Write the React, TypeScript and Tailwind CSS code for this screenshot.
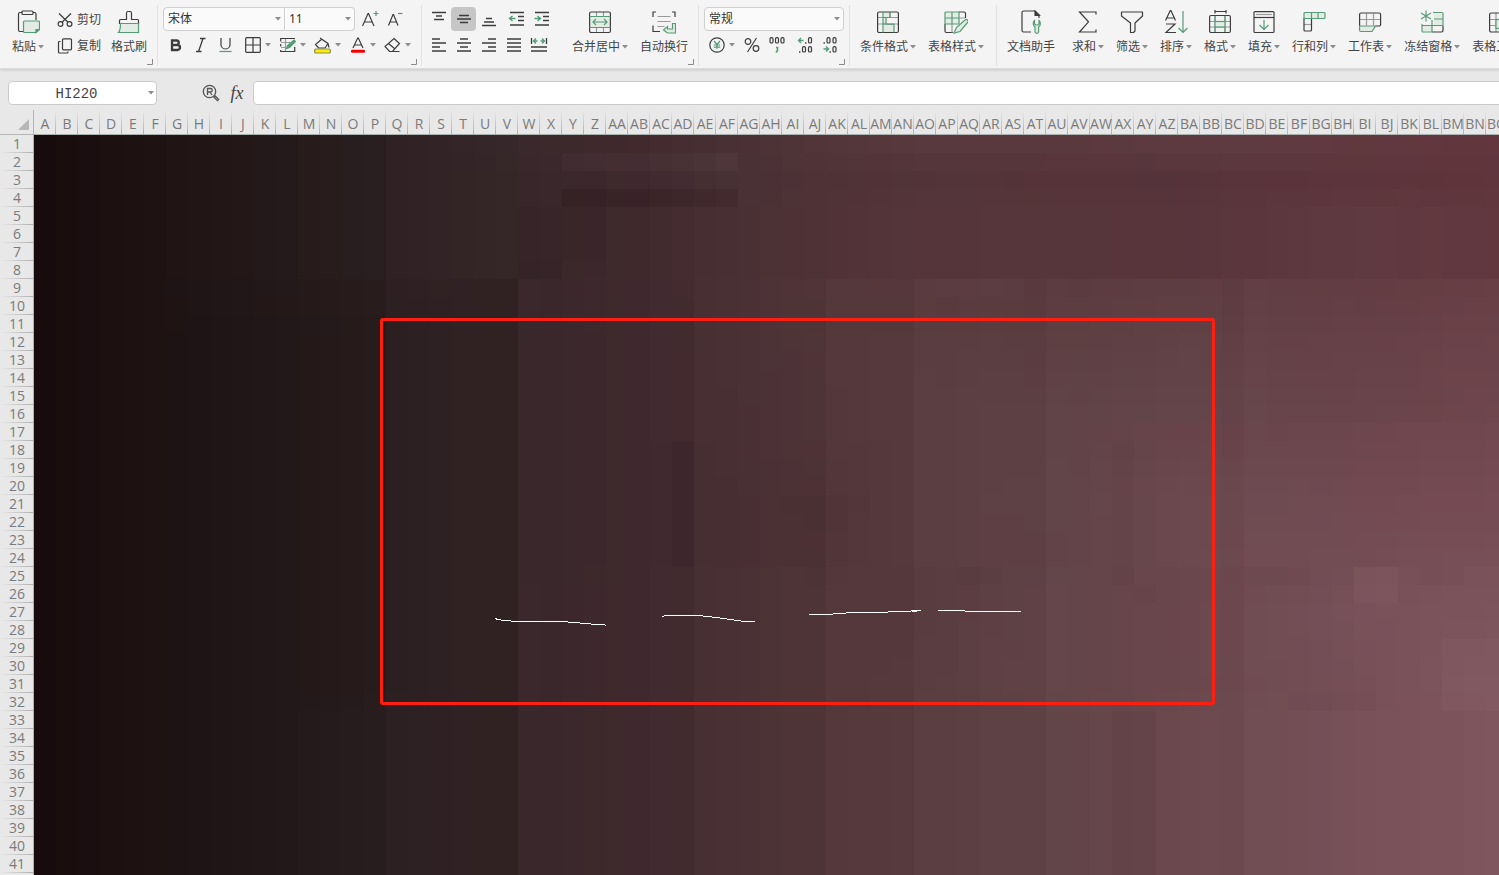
import React from "react";

type Kids = { children?: React.ReactNode };
type RGB = [number, number, number];

const INK = "#3c3c3c";
const GREEN = "#559c76";
const PALE = "#e3ebe5";
const GREY = "#9a9a9a";

/* ---------- sheet colours ---------- */

const hex = (s: string): RGB => [
  parseInt(s.slice(0, 2), 16),
  parseInt(s.slice(2, 4), 16),
  parseInt(s.slice(4, 6), 16),
];

const palette = (s: string) => s.split(" ");
const UPPER = palette("180b0d 1c1011 221617 2a1f20 302224 352628 38272a 3f292d 482f33 513337 553539 57363b 57353b 5c373e 5f3a40 61383f 62373e");
const BLOCK2 = palette("180b0d 1c1011 201516 271b1c 2c1f21 322325 38272a 3f292e 483034 53373b 583c3f 5d3f42 604246 644147 674148 6a4249 6b4349");
const BOTTOM = palette("180b0d 1c1011 201516 281d1e 2d2022 322325 38272a 40292e 483034 53373a 593d40 614448 6a484d 714d54 795159 7d535b 81585f");

const COL_STOPS = [0, 3, 8, 15, 16, 21, 22, 27, 31, 36, 40, 46, 51, 56, 60, 64, 67];
const ROW_STOPS: { row: number; colors: string[] }[] = [
  { row: 1, colors: palette("180b0d 1c1011 221617 2a1f20 302224 36282a 39292c 41292d 493035 533639 58393d 5a393e 5c3a40 5f3a41 60393f 62363d 63363e") },
  { row: 3, colors: palette("180b0d 1c1011 221617 2a1f20 302224 352628 38272a 3f292e 483135 4f3236 523438 553338 55333a 5b343b 5c343b 5f343b 60353c") },
  { row: 5, colors: UPPER },
  { row: 8, colors: UPPER },
  { row: 9, colors: palette("180b0d 1c1011 211617 281c1d 2e2022 322325 39272b 40292e 493035 54373a 593a3e 5b3b3f 5e3d42 603e43 633d43 663e44 673f45") },
  { row: 12, colors: BLOCK2 },
  { row: 16, colors: palette("180b0d 1c1011 201516 271b1c 2c1f21 322325 38272a 3f292e 482f34 52363a 593d40 604347 63454a 67454b 69454b 6d454b 6e464d") },
  { row: 17, colors: palette("180b0d 1c1011 201516 271b1c 2c1f21 322325 38272a 3f292e 482f34 52363a 593d40 604347 67444a 6a464c 6e464d 71474f 724850") },
  { row: 21, colors: palette("180b0d 1c1011 201516 271b1c 2c1f21 322325 38272a 3f292e 472e33 503437 5a3d40 614448 6a484d 6e4b52 734a52 754a53 764b54") },
  { row: 24, colors: palette("180b0d 1c1011 201516 271b1c 2c1f21 322325 38272a 3f292e 472e33 513538 5a3d40 614347 6a484d 714c53 744d54 774f56 784f56") },
  { row: 25, colors: palette("180b0d 1c1011 201516 271b1c 2c1f21 322325 38272a 40292e 483034 53373a 583b3e 62454a 69464b 6f4b52 764f57 7a5259 7b525a") },
  { row: 27, colors: palette("180b0d 1c1011 201516 271b1c 2c1f21 322325 39272b 40292e 483034 53373a 583b3e 63454a 69464b 714d54 79515a 7b535b 7c545c") },
  { row: 31, colors: palette("180b0d 1c1011 201516 271b1c 2c1f21 322325 39272b 40292e 483034 53373a 593c40 63454a 69464b 704c53 764f57 7e565d 80585f") },
  { row: 33, colors: BOTTOM },
  { row: 42, colors: BOTTOM },
];

/* Per-column tone steps where neighbouring bands meet. */
const COL_SHIFT: Record<number, number> = {
  20: -1, 21: -2, 22: 1, 29: -2, 30: 1, 34: -1, 35: -2, 36: 1, 38: -1, 39: -2, 40: 1, 44: -1, 45: -2, 46: 1, 54: -2, 55: 1,
};

/* Local tone shifts: first row, last row, first column, last column, shift. */
const PATCHES: number[][] = [
  [2, 2, 24, 31, 5],
  [4, 4, 24, 31, -6],
  [5, 7, 22, 25, -2],
  [8, 8, 22, 23, -3],
  [9, 9, 41, 44, 2],
  [18, 24, 29, 29, -3],
  [18, 24, 49, 49, -2],
  [21, 24, 34, 36, -1],
  [25, 25, 35, 36, -1],
  [25, 25, 42, 43, -2],
  [25, 25, 49, 49, -3],
  [25, 25, 55, 57, -2],
  [25, 26, 60, 61, 4],
  [25, 25, 63, 64, -3],
  [26, 26, 50, 50, -2],
  [32, 32, 57, 60, -2],
  [29, 32, 64, 66, 2],
  [33, 42, 49, 50, -3],
];

const lerp = (a: number, b: number, t: number) => a + (b - a) * t;

function alongRow(colors: string[], col: number): RGB {
  let i = 0;
  while (i < COL_STOPS.length - 2 && COL_STOPS[i + 1] <= col) i++;
  const t = (col - COL_STOPS[i]) / (COL_STOPS[i + 1] - COL_STOPS[i]);
  const a = hex(colors[i]);
  const b = hex(colors[i + 1]);
  return [lerp(a[0], b[0], t), lerp(a[1], b[1], t), lerp(a[2], b[2], t)];
}

function cellColor(row: number, col: number): string {
  let i = 0;
  while (i < ROW_STOPS.length - 2 && ROW_STOPS[i + 1].row <= row) i++;
  const lo = ROW_STOPS[i];
  const hi = ROW_STOPS[i + 1];
  const t = Math.min(1, (row - lo.row) / (hi.row - lo.row));
  const a = alongRow(lo.colors, col);
  const b = alongRow(hi.colors, col);
  let shift = row > 8 ? COL_SHIFT[col] ?? 0 : 0;
  for (const [r1, r2, c1, c2, d] of PATCHES) {
    if (row >= r1 && row <= r2 && col >= c1 && col <= c2) shift += d;
  }
  const [r, g, bl] = a.map((v, k) => Math.round(lerp(v, b[k], t) + shift));
  return `rgb(${r}, ${g}, ${bl})`;
}

const letter = (i: number) => String.fromCharCode(65 + i);
const colName = (i: number) => (i < 26 ? letter(i) : letter(Math.floor(i / 26) - 1) + letter(i % 26));
const COLUMNS = Array.from({ length: 67 }, (_, i) => colName(i));
const ROWS = Array.from({ length: 42 }, (_, i) => i + 1);

/* ---------- icons ---------- */

function Svg({ w, h, children }: Kids & { w: number; h: number }) {
  return (
    <svg width={w} height={h} viewBox={`0 0 ${w} ${h}`} fill="none" stroke={INK} strokeWidth="1.2" className="flex-none" aria-hidden="true">
      {children}
    </svg>
  );
}

const Arrow = () => (
  <svg width="6" height="4" viewBox="0 0 6 4" className="flex-none" aria-hidden="true">
    <path d="M0 0h6L3 3.500z" fill="#8c8c8c" />
  </svg>
);

const PasteIcon = () => (
  <Svg w={24} h={24}>
    <path d="M6 2.500H4A1.500 1.500 0 0 0 2.500 4v16A1.500 1.500 0 0 0 4 21.500h3M17 2.500h1.500A1.500 1.500 0 0 1 20 4v6" />
    <rect x="6" y="1" width="11" height="3.500" rx="1" />
    <path d="M8.500 11h14a1 1 0 0 1 1 1v7.500L20 22.500H8.500a1 1 0 0 1-1-1V12a1 1 0 0 1 1-1z" fill={PALE} stroke={GREEN} />
    <path d="M23.500 19.500H20v3z" fill={GREEN} stroke={GREEN} />
  </Svg>
);
const CutIcon = () => (
  <Svg w={16} h={16}>
    <circle cx="3.500" cy="12" r="2.400" />
    <circle cx="12.500" cy="12" r="2.400" />
    <path d="M2 1.500l9 8.800M14 1.500L5 10.300" />
  </Svg>
);
const CopyIcon = () => (
  <Svg w={16} h={16}>
    <rect x="5.500" y="0.800" width="9" height="11" rx="1" />
    <path d="M3.500 3.500h-1a1 1 0 0 0-1 1v9.500a1 1 0 0 0 1 1h7.500a1 1 0 0 0 1-1v-.5" />
  </Svg>
);
const BrushIcon = () => (
  <Svg w={24} h={24}>
    <path d="M9.500 9.500V3a1.500 1.500 0 0 1 1.500-1.500h2a1.500 1.500 0 0 1 1.500 1.500v6.500h6a1 1 0 0 1 1 1v3h-19v-3a1 1 0 0 1 1-1z" />
    <path d="M3.500 13.500h18v9H1.500c2-2 2-5 2-9z" fill={PALE} stroke={GREEN} />
  </Svg>
);
const GrowIcon = () => (
  <Svg w={18} h={18}>
    <path d="M0.500 16L6 3.500h.5L12 16M2.500 12h7.500" />
    <path d="M11.500 3.500h5M14 1v5" stroke={GREEN} />
  </Svg>
);
const ShrinkIcon = () => (
  <Svg w={18} h={18}>
    <path d="M1.500 15.500L6 4.500h.5L11 15.500M3 12h6.500" />
    <path d="M11 3.500h4.500" stroke={GREEN} />
  </Svg>
);
const BoldIcon = () => (
  <Svg w={16} h={16}>
    <path d="M4 3.500h4.500a2.200 2.200 0 0 1 0 4.500H4zM4 8h5.500a2.300 2.300 0 0 1 0 5H4z" strokeWidth="2.300" />
  </Svg>
);
const ItalicIcon = () => (
  <Svg w={16} h={16}>
    <path d="M7 1.500h5.500M3 14.500h5.500M10 1.500L5.500 14.500" strokeWidth="1.300" />
  </Svg>
);
const UnderlineIcon = () => (
  <Svg w={16} h={16}>
    <path d="M3 1v6.500a4.500 4.500 0 0 0 9 0V1" />
    <path d="M1.500 14.500h12" stroke={GREEN} />
  </Svg>
);
const BordersIcon = () => (
  <Svg w={16} h={16}>
    <rect x="0.700" y="0.700" width="14.600" height="14.600" rx="1" />
    <path d="M8 1v14M1 8h14" />
  </Svg>
);
const TablePenIcon = () => (
  <Svg w={16} h={16}>
    <path d="M15 1.500H0.700v3M0.700 13v1.500h14V10M0.700 7v2.500" />
    <path d="M1 5.500h9M5.500 2v12M1 10.500h5" stroke={GREY} />
    <path d="M6.500 11.500l1-3L14 3l1.500 1.500-6 6z" fill={GREEN} stroke={GREEN} />
  </Svg>
);
const FillIcon = () => (
  <Svg w={17} h={17}>
    <path d="M6 1l8 5.500-3 4.500H4.500L1.500 7.500 8 2M14 6.500l1 4" />
    <rect x="0.700" y="12" width="15.600" height="4" rx="1" fill="#ffee00" stroke="#8b8b5a" />
  </Svg>
);
const FontColorIcon = () => (
  <Svg w={16} h={16}>
    <path d="M3 11L7.700 1h.6L13 11M4.500 8h7" />
    <rect x="1" y="12.800" width="14" height="3" rx="1.200" fill="#f50000" stroke="none" />
  </Svg>
);
const EraserIcon = () => (
  <Svg w={17} h={16}>
    <path d="M10 1.500l5.500 5-7 8H5.500L1 9.500zM4.500 6.500l6.500 5.500M7.500 14.500h8" />
  </Svg>
);

const Lines = ({ d, green }: { d: string; green?: string }) => (
  <Svg w={18} h={16}>
    <path d={d} strokeWidth="1.300" />
    {green && <path d={green} stroke={GREEN} strokeWidth="1.400" />}
  </Svg>
);

const MergeIcon = () => (
  <Svg w={24} h={24}>
    <path d="M1.500 6.500h21v11h-21z" fill={PALE} stroke="none" />
    <path d="M8.500 2v4.500M15.500 2v4.500M8.500 17.500v5M15.500 17.500v5" stroke={GREY} />
    <rect x="1.600" y="2" width="20.800" height="20.500" rx="1.500" />
    <path d="M1.500 6.500h21M1.500 17.500h21M5 12h14M8 9l-3 3 3 3M16 9l3 3-3 3" stroke={GREEN} />
  </Svg>
);
const WrapIcon = () => (
  <Svg w={24} h={24}>
    <path d="M4 2H1v5M20 2h3v5M1 15.500V21.500h7" />
    <path d="M5.500 6.500h13M5.500 11.500h13M5.500 16.500h7" stroke={GREY} />
    <path d="M20.500 13.500V19h-5v-2.500L11.500 20l4 3H23.500V13.500z" fill={PALE} stroke={GREEN} />
  </Svg>
);
const YenIcon = () => (
  <Svg w={16} h={16}>
    <circle cx="8" cy="8" r="7.200" />
    <path d="M5 4l3 3.500L11 4M8 7.500V12M4.800 8h6.400M4.800 10.200h6.400" stroke={GREEN} />
  </Svg>
);
const PercentIcon = () => (
  <Svg w={16} h={16}>
    <circle cx="4" cy="4.500" r="2.800" />
    <circle cx="12" cy="11.500" r="2.800" />
    <path d="M12.500 1l-9 14" />
  </Svg>
);
const zero = (x: number, y: number) => <rect x={x} y={y} width="3" height="5.400" rx="1.300" strokeWidth="1.200" />;
const ThousandsIcon = () => (
  <Svg w={16} h={18}>
    {zero(1, 1.600)}
    {zero(6.500, 1.600)}
    {zero(12, 1.600)}
    <path d="M7 11.500h1.500v3L7 16.500" stroke={GREEN} strokeWidth="1.600" />
  </Svg>
);
const MoreDecimalsIcon = () => (
  <Svg w={16} h={18}>
    {zero(11.500, 1.600)}
    {zero(5.500, 10.600)}
    {zero(11.500, 10.600)}
    <path d="M8 7h1.400M2 16h1.400" strokeWidth="1.400" />
    <path d="M1.500 4.500h5M4 2L1.500 4.500 4 7" stroke={GREEN} strokeWidth="1.400" />
  </Svg>
);
const FewerDecimalsIcon = () => (
  <Svg w={16} h={18}>
    {zero(5, 1.600)}
    {zero(11, 1.600)}
    {zero(11, 10.600)}
    <path d="M1.500 7h1.400M7.500 16h1.400" strokeWidth="1.400" />
    <path d="M1.500 13h5M4 10.500L6.500 13 4 15.500" stroke={GREEN} strokeWidth="1.400" />
  </Svg>
);
const CondIcon = () => (
  <Svg w={24} h={24}>
    <path d="M7.500 2h6v5.500h-6zM7.500 14h10.500v8.500H7.500zM6.500 7.500h4V14h-4z" fill={PALE} stroke="none" />
    <path d="M2 7.500h20M2 14h20M14 2v6M10.500 14.500h7.500" stroke={GREY} />
    <rect x="1.600" y="2" width="20.800" height="20.500" rx="1.500" />
    <path d="M7 2v20.500M7 7.500h7V2M10 7.500V14M7 14h11v8.500" stroke={GREEN} />
  </Svg>
);
const TableStyleIcon = () => (
  <Svg w={24} h={24}>
    <path d="M1 14v7a1.500 1.500 0 0 0 1.500 1.500H9M15 2h5A1.500 1.500 0 0 1 21.500 3.500V8" />
    <path d="M15 8h6M8 14v8.500" stroke={GREY} />
    <path d="M1 3a1 1 0 0 1 1-1h13v12H1zM1 8h14M8 2v12" fill={PALE} stroke={GREEN} />
    <path d="M10 23l2.500-5.500 8.500-7.500a1.700 1.700 0 0 1 2.500 2.500l-7.500 9z" fill={PALE} stroke={GREEN} />
  </Svg>
);
const DocIcon = () => (
  <Svg w={24} h={24}>
    <path d="M12 22H4.500A1.500 1.500 0 0 1 3 20.500v-18A1.500 1.500 0 0 1 4.500 1H16l4 4v3" />
    <path d="M16 1v4.500h4.500z" fill={INK} />
    <path d="M15.500 10.500c-2 2-1.500 5 .5 6.500v4.500a1.800 1.800 0 0 0 3.600 0V17c2-1.500 2.500-4.500.4-6.500v3.500l-1.200 1h-2l-1.300-1z" fill={PALE} stroke={GREEN} />
  </Svg>
);
const SumIcon = () => (
  <Svg w={24} h={24}>
    <path d="M20 4.500V2H3.500l9 9.800L3.500 22H20v-2.500" />
  </Svg>
);
const FilterIcon = () => (
  <Svg w={24} h={24}>
    <path d="M1.500 2h21v4L15 13v8l-1.500 1.500h-3V13L1.500 6z" strokeLinejoin="round" />
  </Svg>
);
const SortIcon = () => (
  <Svg w={24} h={24}>
    <path d="M1.500 10.500L6.300 0.500h.6l4.600 10M3 8h7M2 14h9L2 22.500h10" />
    <path d="M19 1v21.500M14.500 18l4.500 4.500 4.500-4.500" stroke={GREEN} />
  </Svg>
);
const FormatIcon = () => (
  <Svg w={24} h={24}>
    <path d="M7 1.500h11M7 0v3.500M18 0v3.500" />
    <path d="M7 6v16.500M17 6v16.500M2 11.500h20M2 17h20" stroke={GREY} />
    <rect x="7" y="11.500" width="10" height="5.500" fill={PALE} stroke={GREEN} />
    <path d="M7 6v5M17 6v5M7 17v5M17 17v5" stroke={GREEN} />
    <rect x="1.600" y="5.500" width="20.800" height="17" rx="1.500" />
  </Svg>
);
const FillDownIcon = () => (
  <Svg w={24} h={24}>
    <rect x="2" y="1.600" width="20" height="20.900" rx="1" />
    <path d="M4 4.500h16" stroke={GREY} />
    <path d="M2 7.500h20" />
    <path d="M12 10v9.500M7.500 15l4.500 4.500 4.500-4.500" stroke={GREEN} />
  </Svg>
);
const RowColIcon = () => (
  <Svg w={24} h={24}>
    <path d="M2 14.500h7" stroke={GREY} />
    <path d="M2 8v12a1 1 0 0 0 1 1h5.500a1 1 0 0 0 1-1V8" />
    <rect x="2" y="2.500" width="21" height="6" rx="1" fill={PALE} stroke={GREEN} />
    <path d="M9.500 2.500v6M16 2.500v6" stroke={GREEN} />
  </Svg>
);
const WorksheetIcon = () => (
  <Svg w={24} h={24}>
    <path d="M8.500 3.500v12M15.500 3.500v12M2 9.500h20" stroke={GREY} />
    <path d="M1.600 16V4.500a1.500 1.500 0 0 1 1.500-1.500h18a1.500 1.500 0 0 1 1.500 1.500v10A1.500 1.500 0 0 1 21 16h-3.500" />
    <path d="M1.600 16h16L14 21.500H3a1.500 1.500 0 0 1-1.500-1.500z" fill={PALE} stroke={GREEN} />
  </Svg>
);
const FreezeIcon = () => (
  <Svg w={24} h={24}>
    <path d="M14 3.500h8V15H14zM2 15H12v6.500H2z" fill={PALE} stroke="none" />
    <path d="M23 15.500v5a1.500 1.500 0 0 1-1.500 1.500H12" />
    <path d="M6 0.500v11M1 3l10 6M11 3L1 9" stroke={GREEN} />
    <path d="M2 14v7a1 1 0 0 0 1 1h9M2 15.500h21M12 10v12M13 2.500h9a1 1 0 0 1 1 1v12M14 9h9" stroke={GREEN} />
  </Svg>
);
const ToolsIcon = () => (
  <Svg w={24} h={24}>
    <path d="M2 9.500h20M2 15.500h20M8 3v19M15 3v19" stroke={GREY} />
    <rect x="1.600" y="3" width="20.800" height="19" rx="1.500" />
    <rect x="8" y="9.500" width="13" height="9" fill={PALE} stroke={GREEN} />
  </Svg>
);
const SearchIcon = () => (
  <svg width="18" height="18" viewBox="0 0 18 18" fill="none" stroke="#555" strokeWidth="1.300" aria-hidden="true">
    <circle cx="7.500" cy="7.500" r="6.200" />
    <path d="M5.500 11V4.500h3a1.700 1.700 0 0 1 0 3.500h-3M8 8l2 3" />
    <path d="M12 13.200l1.200-1.200 3.500 3.500-1.200 1.200z" />
  </svg>
);

/* ---------- ribbon parts ---------- */

function Big({ icon, label, arrow = true }: { icon: React.ReactNode; label: string; arrow?: boolean }) {
  return (
    <button type="button" className="flex flex-none flex-col items-center pt-[10px]">
      {icon}
      <span className="mt-[5px] flex items-center gap-[2px] whitespace-nowrap text-xs leading-4">
        {label}
        {arrow && <Arrow />}
      </span>
    </button>
  );
}

function Small({ icon, label, arrow, on }: { icon: React.ReactNode; label: string; arrow?: boolean; on?: boolean }) {
  return (
    <button
      type="button"
      aria-label={label}
      aria-pressed={on}
      className={`flex h-6 flex-none items-center justify-center gap-1 rounded ${arrow ? "w-[35px]" : "w-[25px]"} ${on ? "bg-[#c6c6c6]" : ""}`}
    >
      {icon}
      {arrow && <Arrow />}
    </button>
  );
}

function Combo({ label, value, width, shape }: { label: string; value: string; width: string; shape: string }) {
  return (
    <label className={`relative flex h-6 flex-none items-center border border-[#cfcfcf] bg-[#fafafa] ${width} ${shape}`}>
      <span className="sr-only">{label}</span>
      <select defaultValue={value} className="w-full appearance-none bg-transparent pl-1 text-xs leading-5 text-[#333] outline-none">
        <option>{value}</option>
      </select>
      <span className="pointer-events-none absolute right-[3px] top-1/2 flex -translate-y-1/2">
        <Arrow />
      </span>
    </label>
  );
}

const Launcher = () => (
  <button type="button" aria-label="更多选项" className="absolute bottom-[3px] right-[5px]">
    <svg width="6" height="6" viewBox="0 0 6 6" fill="none" stroke="#8a8a8a" aria-hidden="true">
      <path d="M5.500 0v5.500H0" />
    </svg>
  </button>
);

function Group({ width, launcher, children }: Kids & { width: string; launcher?: boolean }) {
  return (
    <div className={`relative flex flex-none ${width}`}>
      {children}
      {launcher && <Launcher />}
      <span className="absolute bottom-[2px] right-0 top-[5px] w-px bg-[#e2e2e2]" />
    </div>
  );
}

function Ribbon() {
  return (
    <header className="flex h-[69px] flex-none overflow-hidden border-b border-[#dcdcdc] bg-[#f4f4f4] text-[#444] shadow-[0_1px_3px_rgba(0,0,0,0.15)]">
      <Group width="w-[158px] pl-3" launcher>
        <Big icon={<PasteIcon />} label="粘贴" />
        <div className="ml-[13px] mr-[10px] flex flex-col gap-[2px] pt-2 text-xs">
          <button type="button" className="flex h-6 items-center gap-1 whitespace-nowrap"><CutIcon />剪切</button>
          <button type="button" className="flex h-6 items-center gap-1 whitespace-nowrap"><CopyIcon />复制</button>
        </div>
        <Big icon={<BrushIcon />} label="格式刷" arrow={false} />
      </Group>

      <Group width="w-[264px] pl-[5px]" launcher>
        <div className="flex flex-col gap-[2px] pt-[7px]">
          <div className="flex items-center">
            <Combo label="字体" value="宋体" width="w-[122px]" shape="rounded-l" />
            <Combo label="字号" value="11" width="w-[70px]" shape="rounded-r border-l-0" />
            <span className="ml-[3px] flex">
              <Small icon={<GrowIcon />} label="增大字号" />
              <Small icon={<ShrinkIcon />} label="减小字号" />
            </span>
          </div>
          <div className="flex items-center">
            <Small icon={<BoldIcon />} label="加粗" />
            <Small icon={<ItalicIcon />} label="倾斜" />
            <Small icon={<UnderlineIcon />} label="下划线" />
            <span className="ml-[2px] flex">
              <Small icon={<BordersIcon />} label="边框" arrow />
              <Small icon={<TablePenIcon />} label="绘图边框" arrow />
              <Small icon={<FillIcon />} label="填充颜色" arrow />
              <Small icon={<FontColorIcon />} label="字体颜色" arrow />
              <Small icon={<EraserIcon />} label="清除" arrow />
            </span>
          </div>
        </div>
      </Group>

      <Group width="w-[277px] pl-1" launcher>
        <div className="mr-[18px] flex flex-none flex-col gap-[2px] pt-[7px]">
          <div className="flex">
            <Small icon={<Lines d="M2 1.500h14M6 5h6M4 8.500h10" />} label="顶端对齐" />
            <Small icon={<Lines d="M4 4.500h10M2 8h14M5 11.500h8" />} label="垂直居中" on />
            <Small icon={<Lines d="M6 7.500h6M4 11h10M2 14.500h14" />} label="底端对齐" />
            <span className="ml-[3px] flex">
              <Small icon={<Lines d="M2 1.500h14M10 5.500h6M10 9.500h6M2 14h14" green="M1.500 7.500h6M4.500 5l-3 2.500 3 2.500" />} label="减少缩进" />
              <Small icon={<Lines d="M2 1.500h14M10 5.500h6M10 9.500h6M2 14h14" green="M1.500 7.500h6M4.500 5l3 2.500-3 2.500" />} label="增加缩进" />
            </span>
          </div>
          <div className="flex">
            <Small icon={<Lines d="M2 2h8M2 6h14M2 10h8M2 14h14" />} label="左对齐" />
            <Small icon={<Lines d="M5 2h8M2 6h14M5 10h8M2 14h14" />} label="水平居中" />
            <Small icon={<Lines d="M8 2h8M2 6h14M8 10h8M2 14h14" />} label="右对齐" />
            <Small icon={<Lines d="M2 2h14M2 6h14M2 10h14M2 14h14" />} label="两端对齐" />
            <Small icon={<Lines d="M1.500 1v6M16.500 1v6M1 10h16M1 14h16" green="M3.500 4h4M10.500 4h4M6 1.500L3.500 4 6 6.500M12 1.500L14.500 4 12 6.500" />} label="分散对齐" />
          </div>
        </div>
        <div className="flex gap-3">
          <Big icon={<MergeIcon />} label="合并居中" />
          <Big icon={<WrapIcon />} label="自动换行" arrow={false} />
        </div>
      </Group>

      <Group width="w-[151px] pl-[5px]" launcher>
        <div className="flex flex-col gap-[2px] pt-[7px]">
          <Combo label="数字格式" value="常规" width="w-[140px]" shape="rounded" />
          <div className="flex">
            <Small icon={<YenIcon />} label="货币" arrow />
            <Small icon={<PercentIcon />} label="百分比" />
            <Small icon={<ThousandsIcon />} label="千位分隔" />
            <span className="ml-[3px] flex">
              <Small icon={<MoreDecimalsIcon />} label="增加小数位" />
              <Small icon={<FewerDecimalsIcon />} label="减少小数位" />
            </span>
          </div>
        </div>
      </Group>

      <Group width="w-[147px] gap-3 pl-[10px]">
        <Big icon={<CondIcon />} label="条件格式" />
        <Big icon={<TableStyleIcon />} label="表格样式" />
      </Group>

      <div className="flex flex-none gap-3 pl-[10px]">
        <span className="mr-[5px] flex">
          <Big icon={<DocIcon />} label="文档助手" arrow={false} />
        </span>
        <Big icon={<SumIcon />} label="求和" />
        <Big icon={<FilterIcon />} label="筛选" />
        <Big icon={<SortIcon />} label="排序" />
        <Big icon={<FormatIcon />} label="格式" />
        <Big icon={<FillDownIcon />} label="填充" />
        <Big icon={<RowColIcon />} label="行和列" />
        <Big icon={<WorksheetIcon />} label="工作表" />
        <Big icon={<FreezeIcon />} label="冻结窗格" />
        <Big icon={<ToolsIcon />} label="表格工具" />
      </div>
    </header>
  );
}

function FormulaBar() {
  return (
    <div className="flex flex-none items-center pb-[5px] pl-2 pt-3">
      <label className="relative flex h-6 w-[149px] flex-none items-center rounded border border-[#cbcbcb] bg-white">
        <span className="sr-only">名称框</span>
        <input
          defaultValue="HI220"
          className="h-full w-full bg-transparent pr-3 pt-[2px] text-center font-['Liberation_Mono',monospace] text-sm text-[#444] outline-none"
        />
        <span className="pointer-events-none absolute right-[2px] top-1/2 flex -translate-y-1/2">
          <Arrow />
        </span>
      </label>
      <button type="button" aria-label="浏览公式结果" className="ml-[45px] flex w-[18px] flex-none">
        <SearchIcon />
      </button>
      <button type="button" className="w-[33px] flex-none pl-px text-center font-['Liberation_Serif',serif] text-lg italic leading-6 text-[#444]">
        fx
      </button>
      <input aria-label="编辑栏" className="-mr-1 h-6 min-w-0 flex-1 rounded border border-[#cbcbcb] bg-white px-2 text-sm outline-none" />
    </div>
  );
}

function Sheet() {
  return (
    <main className="relative min-h-0 flex-1 overflow-hidden">
      <table className="w-[1508px] table-fixed border-separate border-spacing-0 font-['Open_Sans','Noto_Sans',sans-serif] text-sm text-[#7a7a7a]">
        <colgroup>
          <col className="w-[34px]" />
          {COLUMNS.map((c) => (
            <col key={c} className="w-[22px]" />
          ))}
        </colgroup>
        <thead>
          <tr>
            <th className="h-[25px] border-b border-r border-[#b4b8b6] p-0 pr-1">
              <svg width="11" height="11" viewBox="0 0 11 11" className="ml-auto mt-1" aria-hidden="true">
                <path d="M11 0v11H0z" fill="#b6b6b6" />
              </svg>
            </th>
            {COLUMNS.map((c) => (
              <th
                key={c}
                scope="col"
                className="h-[25px] border-b border-[#aab0ad] bg-[linear-gradient(to_bottom,transparent,#b0b0b0)] bg-[length:1px_100%] bg-right bg-no-repeat p-0 font-normal"
              >
                <span className="flex justify-center whitespace-nowrap pt-1 leading-5">{c}</span>
              </th>
            ))}
          </tr>
        </thead>
        <tbody>
          {ROWS.map((r) => (
            <tr key={r}>
              <th
                scope="row"
                className="h-[18px] border-r border-[#b0b0b0] bg-[linear-gradient(to_right,transparent,#b0b0b0)] bg-[length:100%_1px] bg-bottom bg-no-repeat p-0 pl-px text-center font-normal leading-[18px]"
              >
                {r}
              </th>
              {COLUMNS.map((c, i) => (
                <td key={c} className="p-0" style={{ backgroundColor: cellColor(r, i) }} />
              ))}
            </tr>
          ))}
        </tbody>
      </table>

      <svg width="840" height="392" viewBox="378 315 840 392" fill="none" className="pointer-events-none absolute left-[378px] top-[205px]" aria-hidden="true">
        <rect x="381.500" y="319.500" width="832" height="384" rx="1.500" stroke="#ff1f10" strokeWidth="3" />
        <g stroke="#fff" strokeWidth="1" shapeRendering="crispEdges">
          <path d="M495 618.500l3 1 5 .8 13 1.200h46l18 1.500 14 1.300 11 .7.500 1" />
          <path d="M662 616.500l4-1h33l17 2 15 2 10 1.500 14 .5" />
          <path d="M809 614.500h17l20-1.500 37-.8 27-1 4-1h7M912 611.500h5" />
          <path d="M938 610.500h26l2 1h55" />
        </g>
      </svg>
    </main>
  );
}

export default function App() {
  return (
    <div className="flex h-screen flex-col overflow-hidden bg-[#e8e8e8] font-['Noto_Sans','Noto_Sans_CJK_SC',sans-serif]">
      <Ribbon />
      <FormulaBar />
      <Sheet />
    </div>
  );
}
